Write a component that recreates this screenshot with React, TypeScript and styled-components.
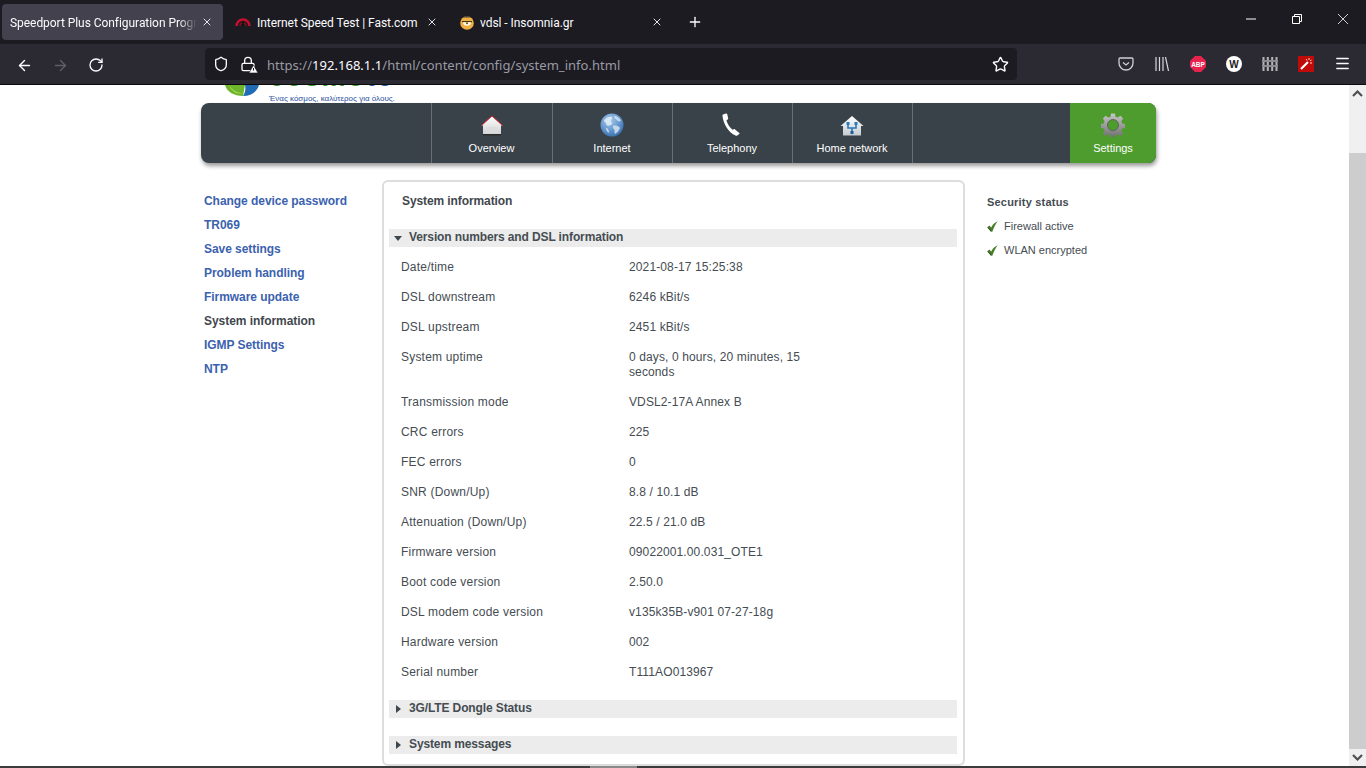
import React from 'react';
import styled, { createGlobalStyle } from 'styled-components';
import { ArrowLeft, ArrowRight, Lock, Menu, Plus, RotateCw, Shield, Star, X } from 'lucide-react';

const GlobalStyle = createGlobalStyle`
  html, body {
    margin: 0;
    height: 100%;
    overflow: hidden;
    background: #fff;
  }
  * {
    box-sizing: border-box;
  }
`;

const Window = styled.div`
  display: flex;
  flex-direction: column;
  width: 1366px;
  height: 768px;
  overflow: hidden;
`;

const TabBar = styled.div`
  display: flex;
  align-items: flex-start;
  flex: none;
  height: 44px;
  padding: 4px 0 0 2px;
  background: #1c1b22;
`;

const Tab = styled.div<{ $active?: boolean }>`
  display: flex;
  align-items: center;
  flex: none;
  width: 221px;
  height: 36px;
  margin-right: 4px;
  padding: 0 10px 0 8px;
  border-radius: 4px;
  background: ${(p) => (p.$active ? '#42414d' : 'transparent')};
  color: #fbfbfe;
  font: 12px Roboto, sans-serif;
`;

const TabIcon = styled.svg`
  flex: none;
  margin-right: 6px;
`;

const TabTitle = styled.span<{ $fade?: boolean }>`
  flex: 1;
  min-width: 0;
  padding-top: 1px;
  overflow: hidden;
  white-space: nowrap;
  margin-right: 4px;
  letter-spacing: -0.05px;
  ${(p) => p.$fade && 'mask-image: linear-gradient(to right, #000 90%, transparent);'}
`;

const TabClose = styled(X)`
  flex: none;
  color: #e4e4e8;
`;

const NewTab = styled.div`
  display: flex;
  align-items: center;
  justify-content: center;
  width: 36px;
  height: 36px;
  color: #fbfbfe;
`;

const TabFill = styled.div`
  flex: 1;
`;

const WindowButton = styled.div`
  display: flex;
  align-items: center;
  justify-content: center;
  flex: none;
  width: 46px;
  height: 38px;
  margin-top: -4px;
  color: #fff;
`;

const Toolbar = styled.div`
  display: flex;
  align-items: center;
  flex: none;
  height: 41px;
  padding: 0 6px 1px;
  border-bottom: 1px solid #0c0c0d;
  background: #2b2a33;
`;

const ToolButton = styled.div<{ $dim?: boolean }>`
  display: flex;
  align-items: center;
  justify-content: center;
  flex: none;
  width: 36px;
  height: 32px;
  color: ${(p) => (p.$dim ? '#5f5e66' : '#fbfbfe')};
`;

const NavButton = styled(ToolButton)`
  padding-top: 3px;
`;

const UrlBar = styled.div`
  display: flex;
  align-items: center;
  flex: 1;
  height: 32px;
  margin: 0 91px;
  padding: 1px 8px 0;
  border-radius: 4px;
  background: #1c1b22;
  color: #fbfbfe;
`;

const LockBox = styled.div`
  position: relative;
  display: flex;
  margin-left: 11px;
`;

const LockWarn = styled.svg`
  position: absolute;
  right: -2px;
  bottom: -1px;
`;

const UrlText = styled.div`
  flex: 1;
  margin-left: 11px;
  padding-top: 1px;
  color: #9a9aa3;
  font: 13px 'Noto Sans', sans-serif;
  letter-spacing: 0.03px;
  white-space: nowrap;
`;

const UrlHost = styled.span`
  color: #fbfbfe;
`;

const Viewport = styled.div`
  display: flex;
  flex: 1;
  min-height: 0;
`;

const Page = styled.main`
  flex: 1;
  min-width: 0;
  padding-left: 201px;
  overflow: hidden;
  background: #fff;
  color: #454c52;
  font: 12px/15px 'Liberation Sans', Arial, sans-serif;
`;

const Scrollbar = styled.div`
  display: flex;
  flex-direction: column;
  flex: none;
  width: 17px;
  background: #f0f0f0;
  color: #505050;
`;

const ScrollArrow = styled.div`
  display: flex;
  align-items: center;
  justify-content: center;
  flex: none;
  height: 17px;
`;

const ScrollTrack = styled.div`
  flex: 1;
  padding-top: 51px;
  display: flex;
`;

const ScrollThumb = styled.div`
  flex: 1;
  background: #cdcdcd;
`;

const BottomEdge = styled.div`
  flex: none;
  height: 2px;
  background: linear-gradient(
    to right,
    #3c3c3c 590px,
    #8a8a8a 590px,
    #8a8a8a 637px,
    #3c3c3c 637px
  );
`;

const LogoArea = styled.div`
  display: flex;
  align-items: flex-end;
  gap: 10px;
  width: 955px;
  height: 18px;
  padding-left: 24px;
  overflow: hidden;
`;

const LogoMark = styled.svg`
  flex: none;
  margin-bottom: 7px;
`;

const LogoText = styled.div`
  display: flex;
  flex-direction: column;
`;

const Brand = styled.div`
  height: 24px;
  margin-bottom: 6px;
  color: #3c9b2e;
  font: bold 27px/24px 'Liberation Sans', Arial, sans-serif;
  letter-spacing: 2px;
`;

const BrandEnd = styled.span`
  color: #1f5aa6;
`;

const Tagline = styled.div`
  color: #2c4f9e;
  font: 8px/8px 'Liberation Sans', Arial, sans-serif;
  white-space: nowrap;
`;

const NavBar = styled.nav`
  display: flex;
  width: 955px;
  height: 60px;
  border-radius: 8px;
  background: #394249;
  box-shadow: 1px 3px 4px rgba(0, 0, 0, 0.4);
`;

const NavLead = styled.div`
  flex: none;
  width: 230px;
`;

const NavItem = styled.a<{ $settings?: boolean }>`
  display: flex;
  flex-direction: column;
  align-items: center;
  flex: none;
  width: ${(p) => (p.$settings ? '86px' : '120px')};
  height: 60px;
  padding-top: 9px;
  ${(p) => !p.$settings && 'border-left: 1px solid #6d7073; padding-right: 1px;'}
  ${(p) => p.$settings && 'border-radius: 0 8px 8px 0; background: #4e9c2e;'}
  color: #fff;
  font-size: 11px;
  line-height: 14px;

  &:first-of-type {
    width: 121px;
  }
`;

const NavIcon = styled.div`
  display: flex;
  align-items: center;
  justify-content: center;
  height: 26px;
  margin-bottom: 3px;
`;

const NavFill = styled.div`
  flex: 1;
  border-left: 1px solid #6d7073;
`;

const Columns = styled.div`
  display: flex;
  align-items: flex-start;
  width: 955px;
  padding-top: 17px;
`;

const SideMenu = styled.ul`
  flex: none;
  width: 181px;
  margin: 0;
  padding: 14px 0 0 3px;
  list-style: none;
`;

const SideItem = styled.li<{ $current?: boolean }>`
  height: 24px;
  color: ${(p) => (p.$current ? '#3f474d' : '#3b62ae')};
  font-weight: bold;
  letter-spacing: -0.05px;
  line-height: 15px;
`;

const Panel = styled.section`
  flex: none;
  width: 583px;
  height: 586px;
  padding: 0 6px 0 5px;
  border: 2px solid #ddd;
  border-radius: 6px;
`;

const PanelTitle = styled.h1`
  margin: 12px 0 20px 13px;
  color: #3f474d;
  font-size: 12px;
  font-weight: bold;
  letter-spacing: -0.1px;
  line-height: 15px;
`;

const SectionHead = styled.div`
  display: flex;
  align-items: center;
  height: 18px;
  margin-top: 18px;
  padding: 0 0 2px 5px;
  background: #ececec;
  font-weight: bold;
  letter-spacing: -0.12px;
`;

const Caret = styled.svg`
  flex: none;
  width: 8px;
  margin: 2px 7px 0 0;
`;

const InfoTable = styled.dl`
  display: grid;
  grid-template-columns: 228px 190px;
  row-gap: 15px;
  margin: 13px 0 20px;
  padding-left: 12px;
`;

const InfoLabel = styled.dt`
  margin: 0;
  letter-spacing: 0.2px;
`;

const InfoValue = styled.dd`
  margin: 0;
  letter-spacing: 0.12px;
`;

const StatusColumn = styled.aside`
  flex: none;
  padding: 15px 0 0 22px;
`;

const StatusTitle = styled.h2`
  margin: 0 0 4px;
  font-size: 11px;
  font-weight: bold;
  letter-spacing: 0.2px;
  line-height: 15px;
`;

const StatusRow = styled.div`
  display: flex;
  align-items: center;
  gap: 6px;
  height: 24px;
  font-size: 11px;
`;

const rows: [string, string][] = [
  ['Date/time', '2021-08-17 15:25:38'],
  ['DSL downstream', '6246 kBit/s'],
  ['DSL upstream', '2451 kBit/s'],
  ['System uptime', '0 days, 0 hours, 20 minutes, 15 seconds'],
  ['Transmission mode', 'VDSL2-17A Annex B'],
  ['CRC errors', '225'],
  ['FEC errors', '0'],
  ['SNR (Down/Up)', '8.8 / 10.1 dB'],
  ['Attenuation (Down/Up)', '22.5 / 21.0 dB'],
  ['Firmware version', '09022001.00.031_OTE1'],
  ['Boot code version', '2.50.0'],
  ['DSL modem code version', 'v135k35B-v901 07-27-18g'],
  ['Hardware version', '002'],
  ['Serial number', 'T111AO013967'],
];

const menu = [
  'Change device password',
  'TR069',
  'Save settings',
  'Problem handling',
  'Firmware update',
  'System information',
  'IGMP Settings',
  'NTP',
];

const HomeIcon = () => (
  <svg width="24" height="22" viewBox="0 0 24 22">
    <defs>
      <linearGradient id="homeBody" x1="0" y1="0" x2="0" y2="1">
        <stop offset="0" stopColor="#fff" />
        <stop offset="1" stopColor="#cfcfcf" />
      </linearGradient>
    </defs>
    <path d="M1.500 11.500 12 2l10.500 9.500H21V21H3v-9.500z" fill="url(#homeBody)" />
    <path d="M1.500 11.500 12 2l10.500 9.500" fill="none" stroke="#e0202c" strokeWidth="1" />
    <path d="M6 19 8 13h8l2 6z" fill="#dcdcdc" />
    <rect x="3" y="20" width="18" height="1.500" fill="#2c2c2c" />
  </svg>
);

const GlobeIcon = () => (
  <svg width="24" height="24" viewBox="0 0 24 24">
    <defs>
      <radialGradient id="globeFill" cx="0.4" cy="0.3" r="0.8">
        <stop offset="0" stopColor="#a9cdf0" />
        <stop offset="1" stopColor="#2c68ad" />
      </radialGradient>
    </defs>
    <circle cx="12" cy="12" r="11.500" fill="url(#globeFill)" />
    <path d="M4 7c3-3 6-4 8-3 1 2-2 3-1 5 2 1 1 3-1 3-2 2-4 0-4-2-1-1-2-1-2-3z" fill="#e4edf5" opacity=".85" />
    <path d="M14 3c3 0 6 2 7 5-2 1-4 0-5-2-1 0-2-2-2-3zM13 13c3-1 6 0 7 2-1 3-3 5-5 6-1-2 0-3-1-5-1 0-1-2-1-3zM6 15c2 0 3 2 3 5-2-1-3-3-3-5z" fill="#dce8f2" opacity=".8" />
  </svg>
);

const PhoneIcon = () => (
  <svg width="20" height="24" viewBox="0 0 20 24">
    <path
      d="M1 1.500 4 .6c.6-.2 1 0 1.200.5l1 4.400c.1.5-.1.8-.5 1l-1.200.8c.6 3 3.400 7.600 6 9.400l1.300-.5c.5-.2.9-.1 1.200.3l4.400 3.400c.3.4.2.8-.2 1.100l-1.900 1.500c-.5.4-1.200.4-1.800.1C6.800 20 1.300 11 .5 3c-.1-.7 0-1.300.5-1.500z"
      fill="#fff"
    />
  </svg>
);

const NetworkHomeIcon = () => (
  <svg width="24" height="22" viewBox="0 0 24 22">
    <defs>
      <linearGradient id="netBody" x1="0" y1="0" x2="0" y2="1">
        <stop offset="0" stopColor="#fff" />
        <stop offset="1" stopColor="#c4cbcf" />
      </linearGradient>
    </defs>
    <path d="M0.500 12 12 2l11.500 10H21v9.500H3V12z" fill="url(#netBody)" />
    <path d="M8 10v4h8v-4M12 14v5" fill="none" stroke="#2a78b8" strokeWidth="1.600" />
    <rect x="6.500" y="8" width="3" height="3" fill="#2a78b8" />
    <rect x="14.500" y="8" width="3" height="3" fill="#2a78b8" />
    <rect x="10.500" y="17" width="3" height="3" fill="#1f5f99" />
  </svg>
);

const GearIcon = () => (
  <svg width="24" height="24" viewBox="0 0 24 24">
    <defs>
      <linearGradient id="gearFill" x1="0" y1="0" x2="0" y2="1">
        <stop offset="0" stopColor="#c6c6c6" />
        <stop offset="1" stopColor="#6c6c6c" />
      </linearGradient>
    </defs>
    <path
      d="M10 0h4l.6 3.300 2.300 1 2.800-1.900 2.900 2.900-1.900 2.800 1 2.300 3.300.6v4l-3.300.6-1 2.300 1.900 2.800-2.900 2.900-2.800-1.900-2.300 1-.6 3.300h-4l-.6-3.300-2.300-1-2.800 1.900-2.900-2.900 1.900-2.800-1-2.300-3.300-.6v-4l3.300-.6 1-2.300-1.900-2.800 2.900-2.900 2.800 1.900 2.300-1z"
      fill="url(#gearFill)"
      transform="scale(.96) translate(.5 .5)"
    />
    <circle cx="12" cy="12" r="5.500" fill="#4e9c2e" stroke="#55594f" strokeWidth=".8" />
  </svg>
);

const CheckIcon = () => (
  <svg width="11" height="11" viewBox="0 0 11 11">
    <path d="M0.300 6.200 2.400 4.400l1.800 2C5.500 3.800 7.600 1.600 10.700.3 8.500 3 6.800 6.500 5.300 10.700H3.800z" fill="#4a7d2a" />
    <path d="M1 6.500 4 10" stroke="#2c4a1c" strokeWidth="1" />
  </svg>
);

const CaretDown = () => (
  <Caret height="5" viewBox="0 0 8 5">
    <path d="M0 0h8L4 5z" fill="#3f474d" />
  </Caret>
);

const CaretRight = () => (
  <Caret height="8" viewBox="0 0 8 8">
    <path d="M2 0l5 4-5 4z" fill="#3f474d" />
  </Caret>
);

const ChevronGlyph = ({ up }: { up?: boolean }) => (
  <svg width="11" height="7" viewBox="0 0 11 7">
    <path
      d={up ? 'M1 6l4.500-4.500L10 6' : 'M1 1l4.500 4.500L10 1'}
      fill="none"
      stroke="currentColor"
      strokeWidth="2.200"
    />
  </svg>
);

function App() {
  return (
    <Window>
      <GlobalStyle />
      <TabBar>
        <Tab $active>
          <TabTitle $fade>Speedport Plus Configuration Program</TabTitle>
          <TabClose size={12} />
        </Tab>
        <Tab>
          <TabIcon width="16" height="16" viewBox="0 0 16 16">
            <path d="M1.500 12a6.500 6.500 0 0 1 13 0" fill="none" stroke="#c8102e" strokeWidth="2.400" />
            <path d="M5 12a3 3 0 0 1 6 0" fill="none" stroke="#7c0f1c" strokeWidth="1.600" />
            <path d="M7 12 7.500 7h1L9 12z" fill="#111" />
          </TabIcon>
          <TabTitle>Internet Speed Test | Fast.com</TabTitle>
          <TabClose size={12} />
        </Tab>
        <Tab>
          <TabIcon width="14" height="16" viewBox="0 0 14 16">
            <circle cx="7" cy="9" r="6.800" fill="#efb043" />
            <path d="M3 3.500a6 6 0 0 1 8 0z" fill="#3d3d3d" />
            <path d="M2 7h10v1.200H2z" fill="#4a3a1e" />
            <path d="M3 8.200h8a4 3.600 0 0 1-8 0z" fill="#fff8e6" />
            <circle cx="7" cy="9.300" r="1" fill="#6b4a10" />
          </TabIcon>
          <TabTitle>vdsl - Insomnia.gr</TabTitle>
          <TabClose size={12} />
        </Tab>
        <NewTab>
          <Plus size={16} />
        </NewTab>
        <TabFill />
        <WindowButton>
          <svg width="10" height="10" viewBox="0 0 10 10">
            <path d="M0 5h10" stroke="currentColor" />
          </svg>
        </WindowButton>
        <WindowButton>
          <svg width="10" height="10" viewBox="0 0 10 10">
            <path d="M.5 2.500h7v7h-7zM2.500 2.500v-2h7v7h-2" fill="none" stroke="currentColor" />
          </svg>
        </WindowButton>
        <WindowButton>
          <svg width="10" height="10" viewBox="0 0 10 10">
            <path d="M0 0l10 10M10 0L0 10" stroke="currentColor" strokeWidth=".8" />
          </svg>
        </WindowButton>
      </TabBar>
      <Toolbar>
        <NavButton>
          <ArrowLeft size={17} />
        </NavButton>
        <NavButton $dim>
          <ArrowRight size={17} />
        </NavButton>
        <NavButton>
          <RotateCw size={16} />
        </NavButton>
        <UrlBar>
          <Shield size={16} />
          <LockBox>
            <Lock size={16} />
            <LockWarn width="9" height="8" viewBox="0 0 9 8">
              <path d="M4.500 0 9 8H0z" fill="#fbfbfe" stroke="#1c1b22" strokeWidth=".6" />
              <path d="M4.500 3v2.500" stroke="#1c1b22" />
            </LockWarn>
          </LockBox>
          <UrlText>
            https://<UrlHost>192.168.1.1</UrlHost>/html/content/config/system_info.html
          </UrlText>
          <Star size={17} />
        </UrlBar>
        <ToolButton>
          <svg width="16" height="14" viewBox="0 0 16 14">
            <path
              d="M2 1h12a1 1 0 0 1 1 1v4a7 7 0 0 1-14 0V2a1 1 0 0 1 1-1z"
              fill="none"
              stroke="#cfcfd4"
              strokeWidth="1.300"
            />
            <path d="M5 5.500 8 8l3-2.500" fill="none" stroke="#cfcfd4" strokeWidth="1.300" />
          </svg>
        </ToolButton>
        <ToolButton>
          <svg width="14" height="14" viewBox="0 0 14 14">
            <path d="M1 0v14M4.500 0v14M8 0v14M10.500 0 13.500 14" fill="none" stroke="#d8d8dc" strokeWidth="1.200" />
          </svg>
        </ToolButton>
        <ToolButton>
          <svg width="16" height="16" viewBox="0 0 16 16">
            <path d="M5 0h6l5 5v6l-5 5H5l-5-5V5z" fill="#e8234e" />
            <text
              x="8"
              y="10.500"
              textAnchor="middle"
              fontFamily="'Liberation Sans', Arial, sans-serif"
              fontSize="6.500"
              fontWeight="bold"
              fill="#fff"
            >
              ABP
            </text>
          </svg>
        </ToolButton>
        <ToolButton>
          <svg width="16" height="16" viewBox="0 0 16 16">
            <circle cx="8" cy="8" r="8" fill="#fff" />
            <text
              x="8"
              y="11.500"
              textAnchor="middle"
              fontFamily="'Liberation Sans', Arial, sans-serif"
              fontSize="10"
              fontWeight="bold"
              fill="#222"
            >
              W
            </text>
          </svg>
        </ToolButton>
        <ToolButton>
          <svg width="16" height="14" viewBox="0 0 16 14">
            <path d="M1.500 0v14M5.800 0v14M10.200 0v14M14.500 0v14" stroke="#b5b5b8" strokeWidth="2" />
            <path d="M0 4h16M0 9h16" stroke="#8c8c90" strokeWidth="2" />
          </svg>
        </ToolButton>
        <ToolButton>
          <svg width="16" height="16" viewBox="0 0 16 16">
            <rect width="16" height="16" fill="#c00a0a" />
            <path d="M3 13 10 6" stroke="#fff" strokeWidth="2.200" />
            <path d="M11 2v2M13.500 4l-1.500 1M14 7h-2M8 3l1 1.500" stroke="#fbd5c0" />
          </svg>
        </ToolButton>
        <ToolButton>
          <Menu size={17} />
        </ToolButton>
      </Toolbar>
      <Viewport>
        <Page>
          <LogoArea>
            <LogoMark width="34" height="11" viewBox="0 0 34 11">
              <path d="M0 0h20l-2 11C9 11 2 7 0 0z" fill="#6fb52c" />
              <path d="M20 0h14C32 7 26 11 18 11c2-3 3-7 2-11z" fill="#1f6cb4" />
              <path d="M4 0c3 5 8 8 13 8-5 2-11-2-13-8z" fill="#a8d65c" />
            </LogoMark>
            <LogoText>
              <Brand>
                cosmo<BrandEnd>te</BrandEnd>
              </Brand>
              <Tagline>Ένας κόσμος, καλύτερος για όλους.</Tagline>
            </LogoText>
          </LogoArea>
          <NavBar>
            <NavLead />
            <NavItem>
              <NavIcon>
                <HomeIcon />
              </NavIcon>
              Overview
            </NavItem>
            <NavItem>
              <NavIcon>
                <GlobeIcon />
              </NavIcon>
              Internet
            </NavItem>
            <NavItem>
              <NavIcon>
                <PhoneIcon />
              </NavIcon>
              Telephony
            </NavItem>
            <NavItem>
              <NavIcon>
                <NetworkHomeIcon />
              </NavIcon>
              Home network
            </NavItem>
            <NavFill />
            <NavItem $settings>
              <NavIcon>
                <GearIcon />
              </NavIcon>
              Settings
            </NavItem>
          </NavBar>
          <Columns>
            <SideMenu>
              {menu.map((item) => (
                <SideItem key={item} $current={item === 'System information'}>
                  {item}
                </SideItem>
              ))}
            </SideMenu>
            <Panel>
              <PanelTitle>System information</PanelTitle>
              <SectionHead>
                <CaretDown />
                Version numbers and DSL information
              </SectionHead>
              <InfoTable>
                {rows.map(([label, value]) => (
                  <React.Fragment key={label}>
                    <InfoLabel>{label}</InfoLabel>
                    <InfoValue>{value}</InfoValue>
                  </React.Fragment>
                ))}
              </InfoTable>
              <SectionHead>
                <CaretRight />
                3G/LTE Dongle Status
              </SectionHead>
              <SectionHead>
                <CaretRight />
                System messages
              </SectionHead>
            </Panel>
            <StatusColumn>
              <StatusTitle>Security status</StatusTitle>
              <StatusRow>
                <CheckIcon />
                Firewall active
              </StatusRow>
              <StatusRow>
                <CheckIcon />
                WLAN encrypted
              </StatusRow>
            </StatusColumn>
          </Columns>
        </Page>
        <Scrollbar>
          <ScrollArrow>
            <ChevronGlyph up />
          </ScrollArrow>
          <ScrollTrack>
            <ScrollThumb />
          </ScrollTrack>
          <ScrollArrow>
            <ChevronGlyph />
          </ScrollArrow>
        </Scrollbar>
      </Viewport>
      <BottomEdge />
    </Window>
  );
}

export default App;
